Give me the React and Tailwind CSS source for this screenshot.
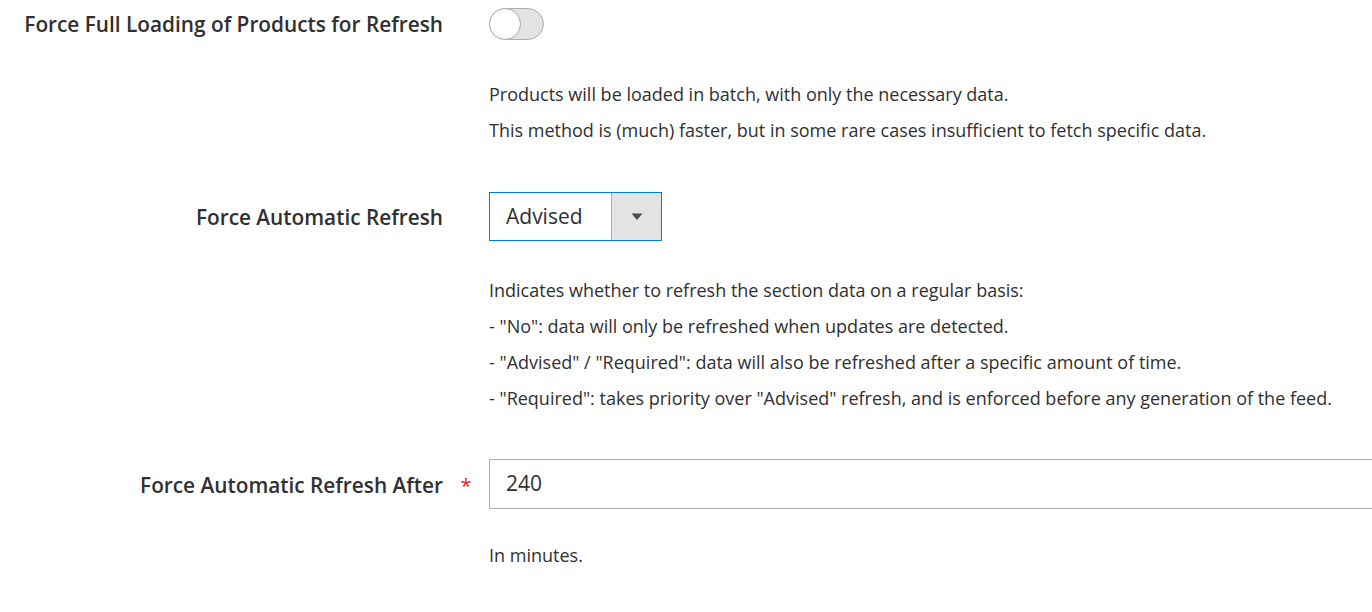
import React from 'react';

const Label = ({ children, required }) => (
    <div className="w-[489px] shrink-0 flex items-center justify-end h-[50px] pt-[3px]">
        <span className="text-[20.8px] font-semibold text-[#303030]">{children}</span>
        <span className="w-[46px] text-center text-[20px] text-[#e22626]">{required ? '*' : ''}</span>
    </div>
);

const Note = ({ lines, className }) => (
    <div className={className}>
        {lines.map((l, i) => (
            <p key={i} className="h-[36px] leading-[36px] text-[18px] text-[#303030] whitespace-nowrap">{l}</p>
        ))}
    </div>
);

const App = () => {
    return (
        <div className="w-[1372px] h-[612px] overflow-hidden bg-white" style={{ fontFamily: '"Open Sans", sans-serif' }}>
            {/* Force full loading */}
            <div className="flex">
                <div className="w-[489px] shrink-0 flex items-center justify-end h-[50px]">
                    <span className="text-[20.8px] font-semibold text-[#303030] pr-[46px]">Force Full Loading of Products for Refresh</span>
                </div>
                <div className="flex-1">
                    <div className="pt-[8px]">
                        <div className="w-[55px] h-[32px] rounded-full bg-[#e3e3e3] border border-[#adadad] relative">
                            <div className="absolute -left-px -top-px w-[32px] h-[32px] rounded-full bg-white border border-[#adadad]"></div>
                        </div>
                    </div>
                    <Note
                        className="mt-[36px]"
                        lines={[
                            'Products will be loaded in batch, with only the necessary data.',
                            'This method is (much) faster, but in some rare cases insufficient to fetch specific data.',
                        ]}
                    />
                </div>
            </div>

            {/* Force automatic refresh */}
            <div className="flex mt-[44px]">
                <div className="w-[489px] shrink-0 flex items-center justify-end h-[49px]">
                    <span className="text-[20.8px] font-semibold text-[#303030] pr-[46px] pt-[2px]">Force Automatic Refresh</span>
                </div>
                <div className="flex-1">
                    <div className="flex w-[173px] h-[49px] border border-[#007bdb]">
                        <div className="flex-1 flex items-center pl-[16px] text-[21px] text-[#303030]">Advised</div>
                        <div className="w-[50px] bg-[#e3e3e3] border-l border-[#adadad] flex items-center justify-center">
                            <svg width="12" height="8" viewBox="0 0 12 8">
                                <path d="M0.5 0.5 L11.5 0.5 L6 7 Z" fill="#514943" />
                            </svg>
                        </div>
                    </div>
                    <Note
                        className="mt-[31px]"
                        lines={[
                            'Indicates whether to refresh the section data on a regular basis:',
                            '- "No": data will only be refreshed when updates are detected.',
                            '- "Advised" / "Required": data will also be refreshed after a specific amount of time.',
                            '- "Required": takes priority over "Advised" refresh, and is enforced before any generation of the feed.',
                        ]}
                    />
                </div>
            </div>

            {/* Refresh after */}
            <div className="flex mt-[43px]">
                <Label required>Force Automatic Refresh After</Label>
                <div className="flex-1">
                    <div className="w-[1000px] h-[50px] border border-[#adadad] flex items-center pl-[16px] text-[21px] text-[#303030]">240</div>
                    <Note className="mt-[28px]" lines={['In minutes.']} />
                </div>
            </div>
        </div>
    );
};

export default App;
